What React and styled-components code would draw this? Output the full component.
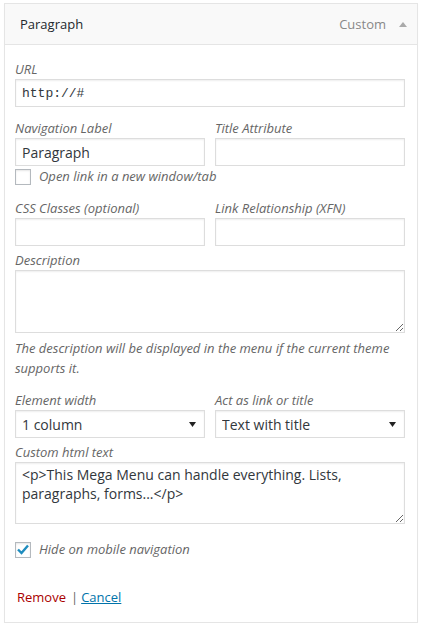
import React from 'react';
import styled, { createGlobalStyle } from 'styled-components';

const GlobalStyle = createGlobalStyle`
  body {
    margin: 0;
    background: #fff;
    font-family: "Open Sans", "Liberation Sans", sans-serif;
  }
`;

const Panel = styled.div`
  margin: 3px 7px 0 4px;
  border: 1px solid #e5e5e5;
  box-shadow: 0 1px 1px rgba(0, 0, 0, 0.04);
  background: #fff;
`;

const Handle = styled.div`
  display: flex;
  align-items: center;
  height: 40px;
  padding: 0 10px 0 15px;
  background: #f9f9f9;
  border-bottom: 1px solid #e5e5e5;
`;

const ItemTitle = styled.span`
  flex: 1;
  font-size: 13px;
  font-weight: 400;
  line-height: 20px;
  color: #23282d;
`;

const ItemType = styled.span`
  font-size: 13px;
  line-height: 20px;
  color: #888;
  margin-right: 13px;
`;

const Settings = styled.div`
  display: flex;
  flex-direction: column;
  padding: 15px 12px 15px 10px;
`;

const Field = styled.div`
  display: flex;
  flex-direction: column;
  margin-top: ${(p) => p.$top || 0}px;
`;

const Row = styled.div`
  display: grid;
  grid-template-columns: 1fr 1fr;
  column-gap: 10px;
  margin-top: ${(p) => p.$top || 0}px;
`;

const Label = styled.label`
  font-size: 13px;
  font-style: italic;
  line-height: 19px;
  color: #666;
`;

const TextInput = styled.input`
  box-sizing: border-box;
  width: 100%;
  height: 28px;
  margin: 0;
  padding: 0 6px;
  border: 1px solid #ddd;
  border-radius: 0;
  box-shadow: inset 0 1px 2px rgba(0, 0, 0, 0.07);
  background: #fff;
  outline: none;
  color: #32373c;
  font-family: ${(p) => (p.$code ? '"Liberation Mono", "DejaVu Sans Mono", monospace' : '"Open Sans", sans-serif')};
  font-size: ${(p) => (p.$code ? 13 : 14)}px;
`;

const TextArea = styled.textarea`
  box-sizing: border-box;
  width: 100%;
  height: ${(p) => p.$height}px;
  margin: 0;
  padding: 2px 6px;
  border: 1px solid #ddd;
  border-radius: 0;
  box-shadow: inset 0 1px 2px rgba(0, 0, 0, 0.07);
  outline: none;
  color: #32373c;
  font-family: "Open Sans", sans-serif;
  font-size: 14px;
  line-height: 19px;
`;

const Help = styled.p`
  margin: 6px 0 0;
  font-size: 13px;
  font-style: italic;
  line-height: 19.5px;
  color: #666;
`;

const SelectWrap = styled.div`
  position: relative;
`;

const Select = styled.select`
  box-sizing: border-box;
  width: 100%;
  height: 28px;
  margin: 0;
  padding: 0 6px;
  border: 1px solid #ddd;
  border-radius: 0;
  box-shadow: inset 0 1px 2px rgba(0, 0, 0, 0.07);
  background: #fff;
  appearance: none;
  outline: none;
  color: #32373c;
  font-family: "Open Sans", sans-serif;
  font-size: 14px;
`;

const Arrow = styled.svg`
  position: absolute;
  right: 9px;
  top: 12px;
  pointer-events: none;
`;

const CheckRow = styled.label`
  display: flex;
  align-items: center;
  gap: 8px;
  margin-top: ${(p) => p.$top || 0}px;
  font-size: 13px;
  font-style: italic;
  line-height: 19px;
  color: #666;
`;

const Box = styled.span`
  box-sizing: border-box;
  display: flex;
  align-items: center;
  justify-content: center;
  width: 16px;
  height: 16px;
  border: 1px solid #b4b9be;
  background: #fff;
  box-shadow: inset 0 1px 2px rgba(0, 0, 0, 0.1);
`;

const Actions = styled.div`
  margin-top: 29px;
  font-size: 13px;
  line-height: 19px;
  color: #666;
  padding-left: 2px;
`;

const ActionLink = styled.a`
  color: ${(p) => (p.$danger ? '#a00' : '#0073aa')};
  text-decoration: ${(p) => (p.$danger ? 'none' : 'underline')};
  cursor: pointer;
`;

const Sep = styled.span`
  margin: 0 3px 0 5px;
`;

const Checkbox = ({ checked }) => (
  <Box>
    {checked && (
      <svg width="12" height="11" viewBox="0 0 12 11">
        <path d="M1 5.5 L4.5 9 L11 1.5" fill="none" stroke="#1e8cbe" strokeWidth="2.4" />
      </svg>
    )}
  </Box>
);

const SelectField = ({ value }) => (
  <SelectWrap>
    <Select defaultValue={value}>
      <option>{value}</option>
    </Select>
    <Arrow width="7" height="5" viewBox="0 0 7 5">
      <polygon points="0,0 7,0 3.5,5" fill="#222" />
    </Arrow>
  </SelectWrap>
);

const App = () => (
  <>
    <GlobalStyle />
    <Panel>
      <Handle>
        <ItemTitle>Paragraph</ItemTitle>
        <ItemType>Custom</ItemType>
        <svg width="8" height="5" viewBox="0 0 8 5">
          <polygon points="0,5 8,5 4,0" fill="#aaa" />
        </svg>
      </Handle>
      <Settings>
        <Field>
          <Label>URL</Label>
          <TextInput $code defaultValue="http://#" />
        </Field>
        <Row $top={12}>
          <Field>
            <Label>Navigation Label</Label>
            <TextInput defaultValue="Paragraph" />
          </Field>
          <Field>
            <Label>Title Attribute</Label>
            <TextInput />
          </Field>
        </Row>
        <CheckRow $top={1}>
          <Checkbox />
          Open link in a new window/tab
        </CheckRow>
        <Row $top={13}>
          <Field>
            <Label>CSS Classes (optional)</Label>
            <TextInput />
          </Field>
          <Field>
            <Label>Link Relationship (XFN)</Label>
            <TextInput />
          </Field>
        </Row>
        <Field $top={5}>
          <Label>Description</Label>
          <TextArea $height={63} />
        </Field>
        <Help>The description will be displayed in the menu if the current theme supports it.</Help>
        <Row $top={13}>
          <Field>
            <Label>Element width</Label>
            <SelectField value="1 column" />
          </Field>
          <Field>
            <Label>Act as link or title</Label>
            <SelectField value="Text with title" />
          </Field>
        </Row>
        <Field $top={5}>
          <Label>Custom html text</Label>
          <TextArea
            $height={62}
            defaultValue="<p>This Mega Menu can handle everything. Lists, paragraphs, forms...</p>"
          />
        </Field>
        <CheckRow $top={16}>
          <Checkbox checked />
          Hide on mobile navigation
        </CheckRow>
        <Actions>
          <ActionLink $danger>Remove</ActionLink>
          <Sep>|</Sep>
          <ActionLink>Cancel</ActionLink>
        </Actions>
      </Settings>
    </Panel>
  </>
);

export default App;
